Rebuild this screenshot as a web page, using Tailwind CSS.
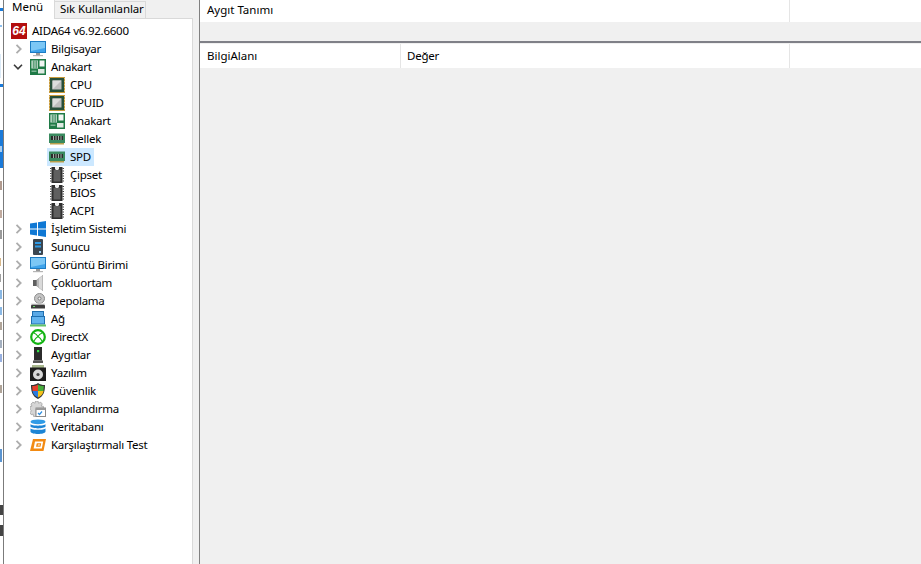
<!DOCTYPE html>
<html lang="tr">
<head>
  <meta charset="UTF-8" />
  <title>AIDA64</title>
  <script src="https://cdn.jsdelivr.net/npm/@tailwindcss/browser@4"></script>
</head>
<body class="bg-[#f0f0f0] text-black text-[11.5px] tracking-[-0.25px] leading-[18px] whitespace-nowrap font-['Noto_Sans',sans-serif] overflow-hidden">

  <!-- icon set -->
  <svg width="0" height="0" class="absolute">
    <symbol id="chev" viewBox="0 0 8 10"><path d="M1.500 .800l4.200 4.200-4.200 4.200" fill="none" stroke="#adadad" stroke-width="1.800"/></symbol>
    <symbol id="chev-open" viewBox="0 0 10 8"><path d="M1 1.800l4 4 4-4" fill="none" stroke="#3a3a3a" stroke-width="1.600"/></symbol>
    <symbol id="monitor" viewBox="0 0 16 16"><rect x="0.500" y="0.500" width="15" height="11" fill="#3fa3ea" stroke="#1c7cc4"/><path d="M1 1h14v6L1 10z" fill="#7cc7f5"/><rect x="6" y="12" width="4" height="2" fill="#9a9a9a"/><rect x="3" y="14" width="10" height="1.200" fill="#b5b5b5"/></symbol>
    <symbol id="board" viewBox="0 0 16 16"><rect width="16" height="16" fill="#1f7a46"/><rect x="1.500" y="1.500" width="6.500" height="8" fill="#f2f6f3"/><path d="M3.200 1.500v8M5 1.500v8M6.800 1.500v8" stroke="#1f7a46"/><rect x="9.500" y="1.500" width="5" height="6" fill="#f2f6f3"/><rect x="8" y="10" width="6.500" height="4.500" fill="#dfeae3"/><rect x="1.500" y="11.500" width="5" height="1.500" fill="#7fb595"/></symbol>
    <symbol id="cpu" viewBox="0 0 16 16"><rect width="16" height="16" fill="#c79a3a"/><path d="M0 1.500h16M0 4.500h16M0 7.500h16M0 10.500h16M0 13.500h16" stroke="#fff" stroke-width=".8" opacity=".5"/><rect x="1" y="1" width="14" height="14" fill="#274f3a"/><rect x="3.500" y="3.500" width="9" height="9" fill="#bdbdbd"/><path d="M3.500 3.500h9l-9 9z" fill="#dcdcdc"/></symbol>
    <symbol id="ram" viewBox="0 0 16 12"><rect y="0.500" width="16" height="9.500" fill="#3a8a5f"/><rect x="2" y="3" width="12" height="4" fill="#2a2a2a"/><path d="M4.500 3v4M7 3v4M9.500 3v4M12 3v4" stroke="#9fb0a6"/><rect x="1" y="10" width="14" height="1.500" fill="#b9a04c"/></symbol>
    <symbol id="chip" viewBox="0 0 14 16"><rect x="1.500" y="0" width="11" height="16" fill="#2f2f2f"/><path d="M5 0h4v1.200a2 2 0 0 1-4 0z" fill="#eee"/><rect x="3.500" y="3" width="7" height="11.500" fill="#5f5f5f"/><path d="M0 1.500h1.500M0 4h1.500M0 6.500h1.500M0 9h1.500M0 11.500h1.500M0 14h1.500M12.500 1.500h1.500M12.500 4h1.500M12.500 6.500h1.500M12.500 9h1.500M12.500 11.500h1.500M12.500 14h1.500" stroke="#444"/></symbol>
    <symbol id="win" viewBox="0 0 16 16"><path d="M0 2.500l7-1v6H0zM8 1.300l8-1.200v7.400H8zM0 8.500h7v6l-7-1zM8 8.500h8v7.400l-8-1.200z" fill="#0f78d4"/></symbol>
    <symbol id="server" viewBox="0 0 16 16"><rect x="3" y="0" width="10" height="16" rx="1" fill="#3b4650"/><rect x="5" y="3" width="6" height="2" fill="#2f9be6"/><rect x="5" y="6.500" width="6" height="2" fill="#2f9be6"/><rect x="9" y="12" width="2" height="2" fill="#9fd3f5"/></symbol>
    <symbol id="speaker" viewBox="0 0 16 16"><path d="M3 5h3.500L13 0v16l-6.500-5H3z" fill="#8c8c8c"/><path d="M6.500 5L13 0v16l-6.500-5z" fill="#b9b9b9"/><path d="M9 3.500L12 1v14l-3-2.500z" fill="#dadada"/><path d="M3 5h3.500v6H3z" fill="#5f5f5f"/></symbol>
    <symbol id="disk" viewBox="0 0 16 16"><circle cx="9.500" cy="5.500" r="5" fill="#c4c4c4" stroke="#8d8d8d"/><circle cx="9.500" cy="5.500" r="1.500" fill="#f2f2f2" stroke="#808080"/><path d="M2 11h12l1 1.500v3H1v-3z" fill="#3c3c3c"/><rect x="1" y="10.500" width="14" height="1.200" fill="#dcdcdc"/><rect x="3" y="13" width="2" height="1" fill="#6ad66a"/></symbol>
    <symbol id="net" viewBox="0 0 16 16"><rect x="2.500" y="0.500" width="11" height="7" fill="#5aa9e6" stroke="#1f6fb0"/><rect x="1.500" y="5.500" width="13" height="7.500" fill="#62b3ee" stroke="#1f6fb0"/><rect x="0" y="13.500" width="16" height="2" fill="#63c46a"/></symbol>
    <symbol id="xbox" viewBox="0 0 16 16"><circle cx="8" cy="8" r="6.800" fill="#fff" stroke="#12b312" stroke-width="2.200"/><path d="M4 4q2.500 1 4 3.500Q9.500 5 12 4M4 12q1.500-3 4-4.500q2.500 1.500 4 4.500" fill="none" stroke="#12b312" stroke-width="1.100"/></symbol>
    <symbol id="device" viewBox="0 0 16 16"><rect x="4" y="0" width="8" height="13.500" fill="#2b2b2b"/><rect x="7" y="3" width="2.200" height="2.200" fill="#35e04a"/><rect x="3" y="13.500" width="10" height="2.500" fill="#555"/></symbol>
    <symbol id="software" viewBox="0 0 16 16"><rect x="2" y="0" width="12" height="4" fill="#a9b98e"/><rect y="2.500" width="16" height="13.500" fill="#1d1d1d"/><circle cx="8" cy="9.500" r="5" fill="#d9d9d9"/><circle cx="8" cy="9.500" r="1.600" fill="#444"/></symbol>
    <symbol id="shield" viewBox="0 0 16 16"><path d="M8 0c2 1.500 4 2 7 2 0 6-1 11-7 14C2 13 1 8 1 2c3 0 5-.5 7-2z" fill="#333"/><path d="M2.200 3C4.500 3 6.500 2.500 8 1.500V8H2.500z" fill="#e5402a"/><path d="M8 1.500C9.500 2.500 11.500 3 13.800 3l-.3 5H8z" fill="#47ad3c"/><path d="M2.500 8H8v6.500C4 12.500 3 10.500 2.500 8z" fill="#2b7be0"/><path d="M8 8h5.500c-.5 2.500-1.500 4.500-5.500 6.500z" fill="#f4c21c"/></symbol>
    <symbol id="config" viewBox="0 0 16 16"><path d="M5.500 0h2.500l.5 2.200 2.300-1 1.500 1.800-1.200 2 2.400.4v2.500H6v7.500H3.500l-.3-2.300-2 .6L0 11.500l1.500-1.800L0 8.500V5.500l2-.4-1-2L2.800 1.200l2.300 1z" fill="#d6d6d6" stroke="#9a9a9a" stroke-width=".7"/><rect x="6" y="7" width="9.500" height="8.500" fill="#fff" stroke="#8a8a8a"/><rect x="6" y="7" width="9.500" height="2" fill="#9a9a9a"/><path d="M8 12l1.500 1.500 2.500-3" fill="none" stroke="#2f8fe0" stroke-width="1.200"/></symbol>
    <symbol id="db" viewBox="0 0 16 16"><ellipse cx="8" cy="2.800" rx="7.500" ry="2.400" fill="#2f9be6"/><path d="M.5 5c1 2.200 14 2.200 15 0v2.600c-1 2.400-14 2.400-15 0z" fill="#1c84d4"/><path d="M.5 9.200c1 2.200 14 2.200 15 0v3.600c-1 3-14 3-15 0z" fill="#1c84d4"/></symbol>
    <symbol id="bench" viewBox="0 0 16 12"><path d="M3 0h13l-2.500 12H0z" fill="#f28a12"/><path d="M5 2.500h8.200l-1.400 7H3.600z" fill="#fff"/><path d="M6.800 4.300h4.400l-.7 3.400H6z" fill="#f28a12"/><path d="M8 5.400h2l-.3 1.200h-2z" fill="#fff"/></symbol>
  </svg>

  <div class="flex h-[564px] w-[921px]">

    <!-- leftover of the window behind -->
    <div class="relative w-[3px] shrink-0 bg-white overflow-hidden">
      <span class="absolute left-0 top-[8px] h-[3px] w-[3px] bg-[#1a7ad9]"></span>
      <span class="absolute left-0 top-[25px] h-[2px] w-[2px] bg-[#8fc0ee]"></span>
      <span class="absolute left-0 top-[54px] h-[24px] w-[1px] bg-[#dcebf8]"></span>
      <span class="absolute left-0 top-[84px] h-[3px] w-[3px] bg-[#1a7ad9]"></span>
      <span class="absolute left-0 top-[130px] h-[38px] w-[3px] bg-[#1a7ad9]"></span>
      <span class="absolute left-0 top-[146px] h-[6px] w-[2px] bg-[#a9cdf0]"></span>
      <span class="absolute left-0 top-[181px] h-[9px] w-[2px] bg-[#b09a8e]"></span>
      <span class="absolute left-0 top-[210px] h-[8px] w-[2px] bg-[#c0aa9e]"></span>
      <span class="absolute left-0 top-[230px] h-[9px] w-[2px] bg-[#9a9a9a]"></span>
      <span class="absolute left-0 top-[258px] h-[8px] w-[1px] bg-[#d8b88a]"></span>
      <span class="absolute left-0 top-[274px] h-[8px] w-[1px] bg-[#a0a0a0]"></span>
      <span class="absolute left-0 top-[290px] h-[9px] w-[2px] bg-[#8ab8e4]"></span>
      <span class="absolute left-0 top-[307px] h-[8px] w-[2px] bg-[#8ab8e4]"></span>
      <span class="absolute left-0 top-[322px] h-[8px] w-[2px] bg-[#b0a498]"></span>
      <span class="absolute left-0 top-[340px] h-[8px] w-[2px] bg-[#a4b0c0]"></span>
      <span class="absolute left-0 top-[354px] h-[8px] w-[2px] bg-[#98b0e0]"></span>
      <span class="absolute left-0 top-[385px] h-[8px] w-[2px] bg-[#b0a498]"></span>
      <span class="absolute left-0 top-[449px] h-[13px] w-[2px] bg-[#5a94d0]"></span>
      <span class="absolute left-0 top-[505px] h-[10px] w-[3px] bg-[#444]"></span>
      <span class="absolute left-0 top-[525px] h-[11px] w-[3px] bg-[#444]"></span>
    </div>
    <div class="w-[1px] shrink-0 bg-[#7b7b7b]"></div>

    <!-- left panel with tabs -->
    <div class="w-[189px] shrink-0 flex flex-col bg-[#f0f0f0]">
      <div class="flex h-[18px] items-end relative">
        <div class="w-[51px] h-[19px] -mb-[1px] bg-white pl-[8px] leading-[14px] tracking-normal relative z-10 border-r border-[#d9d9d9]">Menü</div>
        <div class="w-[91px] h-[17px] pl-[5px] bg-[#f0f0f0] border-r border-t border-[#d9d9d9] leading-[13px] tracking-[-0.12px]">Sık Kullanılanlar</div>
      </div>
      <div class="flex-1 bg-white border-t border-r border-[#d9d9d9] pt-[3px] pl-[1px]">
        <div class="h-[18px] flex items-center pl-[6px] gap-[5px]">
          <span class="w-4 h-4 bg-[#b30e0e] text-white text-[12px] tracking-normal leading-4 font-bold italic text-center shrink-0 font-['Liberation_Sans',sans-serif]">64</span>
          <span>AIDA64 v6.92.6600</span>
        </div>

        <div class="h-[18px] flex items-center"><svg class="w-2 h-[10px] ml-[10px] mr-[7px]"><use href="#chev"/></svg><svg class="w-4 h-4 mr-[5px]"><use href="#monitor"/></svg><span>Bilgisayar</span></div>
        <div class="h-[18px] flex items-center"><svg class="w-[10px] h-2 ml-[8px] mr-[7px]"><use href="#chev-open"/></svg><svg class="w-4 h-4 mr-[5px]"><use href="#board"/></svg><span>Anakart</span></div>

        <div class="h-[18px] flex items-center pl-[44px]"><svg class="w-4 h-4 mr-[5px]"><use href="#cpu"/></svg><span>CPU</span></div>
        <div class="h-[18px] flex items-center pl-[44px]"><svg class="w-4 h-4 mr-[5px]"><use href="#cpu"/></svg><span>CPUID</span></div>
        <div class="h-[18px] flex items-center pl-[44px]"><svg class="w-4 h-4 mr-[5px]"><use href="#board"/></svg><span>Anakart</span></div>
        <div class="h-[18px] flex items-center pl-[44px]"><svg class="w-4 h-3 mr-[5px]"><use href="#ram"/></svg><span>Bellek</span></div>
        <div class="h-[18px] flex items-center pl-[42px]"><div class="h-[18px] flex items-center bg-[#cce8ff] pl-[2px] pr-[3px]"><svg class="w-4 h-3 mr-[5px]"><use href="#ram"/></svg><span>SPD</span></div></div>
        <div class="h-[18px] flex items-center pl-[45px]"><svg class="w-[14px] h-4 mr-[6px]"><use href="#chip"/></svg><span>Çipset</span></div>
        <div class="h-[18px] flex items-center pl-[45px]"><svg class="w-[14px] h-4 mr-[6px]"><use href="#chip"/></svg><span>BIOS</span></div>
        <div class="h-[18px] flex items-center pl-[45px]"><svg class="w-[14px] h-4 mr-[6px]"><use href="#chip"/></svg><span>ACPI</span></div>

        <div class="h-[18px] flex items-center"><svg class="w-2 h-[10px] ml-[10px] mr-[7px]"><use href="#chev"/></svg><svg class="w-4 h-4 mr-[5px]"><use href="#win"/></svg><span>İşletim Sistemi</span></div>
        <div class="h-[18px] flex items-center"><svg class="w-2 h-[10px] ml-[10px] mr-[7px]"><use href="#chev"/></svg><svg class="w-4 h-4 mr-[5px]"><use href="#server"/></svg><span>Sunucu</span></div>
        <div class="h-[18px] flex items-center"><svg class="w-2 h-[10px] ml-[10px] mr-[7px]"><use href="#chev"/></svg><svg class="w-4 h-4 mr-[5px]"><use href="#monitor"/></svg><span>Görüntü Birimi</span></div>
        <div class="h-[18px] flex items-center"><svg class="w-2 h-[10px] ml-[10px] mr-[7px]"><use href="#chev"/></svg><svg class="w-4 h-4 mr-[5px]"><use href="#speaker"/></svg><span>Çokluortam</span></div>
        <div class="h-[18px] flex items-center"><svg class="w-2 h-[10px] ml-[10px] mr-[7px]"><use href="#chev"/></svg><svg class="w-4 h-4 mr-[5px]"><use href="#disk"/></svg><span>Depolama</span></div>
        <div class="h-[18px] flex items-center"><svg class="w-2 h-[10px] ml-[10px] mr-[7px]"><use href="#chev"/></svg><svg class="w-4 h-4 mr-[5px]"><use href="#net"/></svg><span>Ağ</span></div>
        <div class="h-[18px] flex items-center"><svg class="w-2 h-[10px] ml-[10px] mr-[7px]"><use href="#chev"/></svg><svg class="w-4 h-4 mr-[5px]"><use href="#xbox"/></svg><span>DirectX</span></div>
        <div class="h-[18px] flex items-center"><svg class="w-2 h-[10px] ml-[10px] mr-[7px]"><use href="#chev"/></svg><svg class="w-4 h-4 mr-[5px]"><use href="#device"/></svg><span>Aygıtlar</span></div>
        <div class="h-[18px] flex items-center"><svg class="w-2 h-[10px] ml-[10px] mr-[7px]"><use href="#chev"/></svg><svg class="w-4 h-4 mr-[5px]"><use href="#software"/></svg><span>Yazılım</span></div>
        <div class="h-[18px] flex items-center"><svg class="w-2 h-[10px] ml-[10px] mr-[7px]"><use href="#chev"/></svg><svg class="w-4 h-4 mr-[5px]"><use href="#shield"/></svg><span>Güvenlik</span></div>
        <div class="h-[18px] flex items-center"><svg class="w-2 h-[10px] ml-[10px] mr-[7px]"><use href="#chev"/></svg><svg class="w-4 h-4 mr-[5px]"><use href="#config"/></svg><span>Yapılandırma</span></div>
        <div class="h-[18px] flex items-center"><svg class="w-2 h-[10px] ml-[10px] mr-[7px]"><use href="#chev"/></svg><svg class="w-4 h-4 mr-[5px]"><use href="#db"/></svg><span>Veritabanı</span></div>
        <div class="h-[18px] flex items-center"><svg class="w-2 h-[10px] ml-[10px] mr-[7px]"><use href="#chev"/></svg><svg class="w-4 h-3 mr-[5px]"><use href="#bench"/></svg><span>Karşılaştırmalı Test</span></div>
      </div>
    </div>

    <!-- splitter -->
    <div class="w-[6px] shrink-0 bg-[#f0f0f0]"></div>
    <div class="w-[1px] shrink-0 bg-[#808080]"></div>

    <!-- right panel -->
    <div class="flex-1 flex flex-col">
      <div class="flex h-[22px] bg-white shrink-0">
        <div class="w-[590px] pl-[7px] border-r border-[#e5e5e5] leading-[20px] tracking-normal">Aygıt Tanımı</div>
      </div>
      <div class="h-[19px] shrink-0 bg-[#f0f0f0]"></div>
      <div class="h-[2px] shrink-0 bg-[#7f8087]"></div>
      <div class="flex h-[24px] mt-[1px] bg-white shrink-0">
        <div class="w-[201px] pl-[7px] border-r border-[#e5e5e5] leading-[24px] tracking-normal">BilgiAlanı</div>
        <div class="w-[389px] pl-[6px] border-r border-[#e5e5e5] leading-[24px]">Değer</div>
      </div>
      <div class="flex-1 bg-[#f0f0f0]"></div>
    </div>
  </div>
</body>
</html>
